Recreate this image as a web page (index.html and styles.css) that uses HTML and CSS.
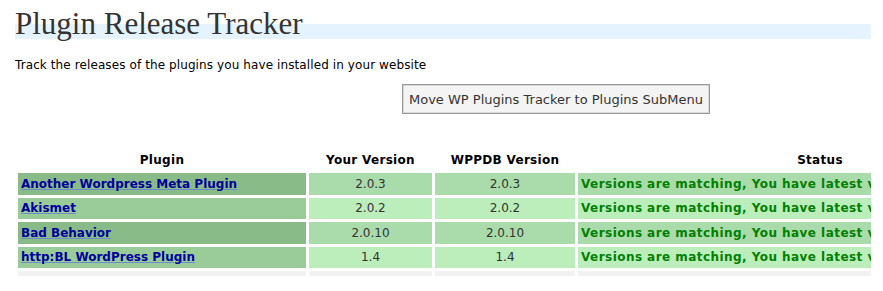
FILE: index.html
```html
<!DOCTYPE html>
<html lang="en">
<head>
    <meta charset="UTF-8">
    <title>Plugin Release Tracker</title>
    <link rel="stylesheet" href="styles.css">
</head>
<body>
    <div class="wrap">
        <h2>Plugin Release Tracker</h2>
        <p class="intro">Track the releases of the plugins you have installed in your website</p>
        <div class="actions">
            <button class="move-btn">Move WP Plugins Tracker to Plugins SubMenu</button>
        </div>

        <table class="tracker">
            <thead>
                <tr>
                    <th class="col-plugin">Plugin</th>
                    <th class="col-yours">Your Version</th>
                    <th class="col-wppdb">WPPDB Version</th>
                    <th class="col-status">Status</th>
                </tr>
            </thead>
            <tbody>
                <tr class="odd">
                    <td class="name"><a href="#">Another Wordpress Meta Plugin</a></td>
                    <td>2.0.3</td>
                    <td>2.0.3</td>
                    <td class="status">Versions are matching, You have latest version</td>
                </tr>
                <tr class="even">
                    <td class="name"><a href="#">Akismet</a></td>
                    <td>2.0.2</td>
                    <td>2.0.2</td>
                    <td class="status">Versions are matching, You have latest version</td>
                </tr>
                <tr class="odd">
                    <td class="name"><a href="#">Bad Behavior</a></td>
                    <td>2.0.10</td>
                    <td>2.0.10</td>
                    <td class="status">Versions are matching, You have latest version</td>
                </tr>
                <tr class="even">
                    <td class="name"><a href="#">http:BL WordPress Plugin</a></td>
                    <td>1.4</td>
                    <td>1.4</td>
                    <td class="status">Versions are matching, You have latest version</td>
                </tr>
                <tr class="blank">
                    <td></td>
                    <td></td>
                    <td></td>
                    <td></td>
                </tr>
            </tbody>
        </table>
    </div>
</body>
</html>
```

FILE: styles.css
```css
body {
    margin: 0;
    background-color: #fff;
    font-family: "DejaVu Sans", Verdana, sans-serif;
    color: #333;
}
.wrap {
    margin: 0 12px 0 15px;
    height: 276px;
    overflow: hidden;
}
h2 {
    margin: 0;
    height: 39px;
    font-family: "Liberation Serif", Georgia, serif;
    font-weight: normal;
    font-size: 31px;
    line-height: 47px;
    color: #333;
    background: linear-gradient(to bottom, transparent 24px, #e5f3ff 24px);
    white-space: nowrap;
    overflow: visible;
}
.intro {
    margin: 19px 0 0;
    font-size: 12px;
    line-height: 14px;
    letter-spacing: 0.1px;
    color: #000;
}
.actions {
    margin-top: 12px;
    padding-left: 387px;
}
.move-btn {
    height: 30px;
    padding: 0 6px;
    font-family: "DejaVu Sans", Verdana, sans-serif;
    font-size: 13px;
    color: #333;
    background-color: #f4f4f4;
    border: 1px solid #999;
    box-shadow: inset 0 0 0 1px #d8d8d8;
    border-radius: 0;
}
.tracker {
    margin-top: 33px;
    border-spacing: 3px;
    table-layout: fixed;
    width: 1050px;
    font-size: 12px;
}
.tracker th {
    height: 20px;
    padding: 0;
    font-size: 12px;
    font-weight: bold;
    letter-spacing: 0.3px;
    color: #000;
    text-align: center;
}
.col-plugin { width: 288px; }
.col-yours { width: 123px; }
.col-wppdb { width: 140px; }
.col-status { width: 484px; }
.tracker td {
    height: 21.5px;
    padding: 0 3px;
    text-align: center;
    white-space: nowrap;
    overflow: hidden;
}
.tracker td.name {
    text-align: left;
}
.tracker a {
    font-size: 12px;
    font-weight: bold;
    color: #00009c;
    text-decoration: underline;
    text-decoration-color: #6c8ccc;
}
.tracker td.status {
    text-align: left;
    font-size: 12px;
    font-weight: bold;
    color: #008000;
    letter-spacing: 0.45px;
}
.odd td { background-color: #aadbaa; }
.odd td.name { background-color: #89bb89; }
.even td { background-color: #bbeebb; }
.even td.name { background-color: #99cc99; }
.blank td { background-color: #f2f2f2; }
```
